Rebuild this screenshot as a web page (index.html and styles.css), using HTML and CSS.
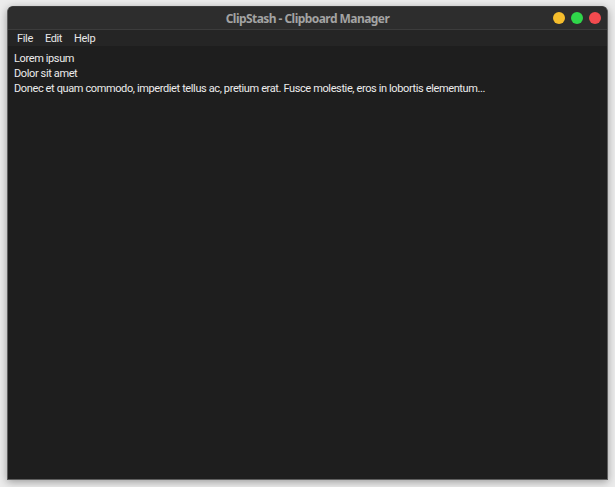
FILE: index.html
```html
<!DOCTYPE html>
<html>
<head>
<meta charset="utf-8">
<link rel="stylesheet" href="styles.css">
</head>
<body>
<div class="window">
  <div class="titlebar">
    <div class="title">ClipStash - Clipboard Manager</div>
    <div class="controls">
      <span class="dot yellow"></span>
      <span class="dot green"></span>
      <span class="dot red"></span>
    </div>
  </div>
  <div class="menubar">
    <span class="menu">File</span>
    <span class="menu">Edit</span>
    <span class="menu">Help</span>
  </div>
  <div class="content">
    <div class="item">Lorem ipsum</div>
    <div class="item">Dolor sit amet</div>
    <div class="item">Donec et quam commodo, imperdiet tellus ac, pretium erat. Fusce molestie, eros in lobortis elementum...</div>
  </div>
</div>
</body>
</html>
```
FILE: styles.css
```css
html, body {
  margin: 0;
  padding: 0;
  width: 615px;
  height: 487px;
  overflow: hidden;
  background: #ececec;
}
body {
  padding: 6px 7px 0 7px;
  box-sizing: border-box;
}
.window {
  width: 601px;
  height: 474px;
  box-sizing: border-box;
  border: 1px solid #5e5e5e;
  border-top-color: #3a3a3a;
  border-radius: 6px 6px 0 0;
  background: #1e1e1e;
  display: flex;
  flex-direction: column;
  box-shadow: 0 2px 8px rgba(0,0,0,0.35);
  overflow: hidden;
}
.titlebar {
  height: 22px;
  background: #2d2d2d;
  border-bottom: 1px solid #3c3c3c;
  position: relative;
  display: flex;
  align-items: center;
  justify-content: center;
  flex-shrink: 0;
}
.title {
  font-family: "Noto Sans", "Open Sans", sans-serif;
  font-weight: bold;
  font-size: 12px;
  letter-spacing: -0.55px;
  color: #a3a3a3;
}
.controls {
  position: absolute;
  right: 6px;
  top: 5px;
  display: flex;
  gap: 6px;
}
.dot {
  width: 12px;
  height: 12px;
  border-radius: 50%;
  display: block;
}
.yellow { background: #f5bd2c; }
.green { background: #2fd64a; }
.red { background: #f34b4f; }
.menubar {
  height: 16px;
  background: #252525;
  display: flex;
  align-items: center;
  padding-left: 9px;
  gap: 12px;
  font-family: Roboto, "Liberation Sans", sans-serif;
  font-size: 11px;
  letter-spacing: -0.35px;
  color: #e8e8e8;
  flex-shrink: 0;
}
.content {
  padding: 5px 6px;
  font-family: Roboto, "Liberation Sans", sans-serif;
  font-size: 11px;
  letter-spacing: -0.38px;
  line-height: 15px;
  color: #ececec;
}
.item {
  white-space: nowrap;
}
```
